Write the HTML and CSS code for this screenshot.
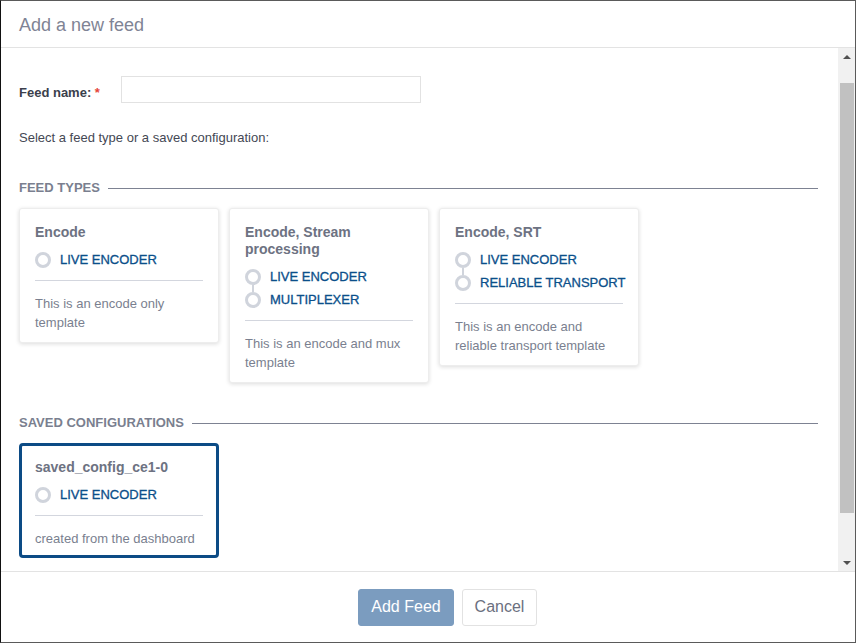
FILE: index.html
```html
<!DOCTYPE html>
<html>
<head>
<meta charset="utf-8">
<link rel="stylesheet" href="styles.css">
</head>
<body>
<div class="modal">
  <div class="modal-header"><h1 class="modal-title">Add a new feed</h1></div>
  <div class="modal-main">
    <div class="modal-body">
      <div class="form-row">
        <label class="form-label">Feed name: <span class="req">*</span></label>
        <input class="form-input" type="text">
      </div>
      <p class="hint">Select a feed type or a saved configuration:</p>

      <div class="section-head"><span>FEED TYPES</span></div>
      <div class="card-list">
        <div class="card">
          <div class="card-title">Encode</div>
          <ul class="steps">
            <li class="step"><span class="dot"></span>LIVE ENCODER</li>
          </ul>
          <div class="card-sep"></div>
          <p class="card-desc">This is an encode only template</p>
        </div>
        <div class="card">
          <div class="card-title">Encode, Stream processing</div>
          <ul class="steps">
            <li class="step"><span class="dot linked"></span>LIVE ENCODER</li>
            <li class="step"><span class="dot"></span>MULTIPLEXER</li>
          </ul>
          <div class="card-sep"></div>
          <p class="card-desc">This is an encode and mux template</p>
        </div>
        <div class="card">
          <div class="card-title">Encode, SRT</div>
          <ul class="steps">
            <li class="step"><span class="dot linked"></span>LIVE ENCODER</li>
            <li class="step"><span class="dot"></span>RELIABLE TRANSPORT</li>
          </ul>
          <div class="card-sep"></div>
          <p class="card-desc">This is an encode and reliable transport template</p>
        </div>
      </div>

      <div class="section-head saved-head"><span>SAVED CONFIGURATIONS</span></div>
      <div class="card-list">
        <div class="card card-selected">
          <div class="card-title">saved_config_ce1-0</div>
          <ul class="steps">
            <li class="step"><span class="dot"></span>LIVE ENCODER</li>
          </ul>
          <div class="card-sep"></div>
          <p class="card-desc">created from the dashboard</p>
        </div>
      </div>
    </div>
    <div class="scrollbar">
      <div class="sb-btn"><span class="arrow-up"></span></div>
      <div class="sb-track"><div class="sb-thumb"></div></div>
      <div class="sb-btn"><span class="arrow-down"></span></div>
    </div>
  </div>
  <div class="modal-footer">
    <button class="btn btn-primary">Add Feed</button>
    <button class="btn btn-default">Cancel</button>
  </div>
</div>
</body>
</html>
```
FILE: styles.css
```css
* { box-sizing: border-box; }
html, body { margin: 0; padding: 0; background: #fff; }
body { font-family: "Liberation Sans", Arial, sans-serif; }

.modal {
  width: 856px;
  height: 643px;
  border: 1px solid #5a5a5a;
  border-left-color: #111;
  display: flex;
  flex-direction: column;
  background: #fff;
}

.modal-header {
  height: 47px;
  border-bottom: 1px solid #e3e3e3;
  padding: 0 18px;
  display: flex;
  align-items: center;
}
.modal-title {
  margin: 0;
  font-size: 18px;
  font-weight: normal;
  color: #7f8495;
  line-height: 22px;
  padding-top: 1px;
}

.modal-main {
  flex: 1;
  display: flex;
  min-height: 0;
}
.modal-body {
  flex: 1;
  padding: 28px 20px 0 18px;
  overflow: hidden;
}

.form-row {
  display: flex;
  align-items: center;
  height: 27px;
}
.form-label {
  width: 102px;
  font-size: 13px;
  font-weight: bold;
  color: #3b3f4c;
  padding-top: 5px;
}
.req { color: #e5453a; }
.form-input {
  width: 300px;
  height: 27px;
  border: 1px solid #e2e2e2;
  margin: 0;
  padding: 0 6px;
  font: inherit;
}

.hint {
  margin: 27px 0 0;
  font-size: 13px;
  line-height: 16px;
  color: #444854;
}

.section-head {
  display: flex;
  align-items: center;
  margin-top: 34px;
  margin-bottom: 12px;
  font-size: 13px;
  font-weight: bold;
  line-height: 16px;
  color: #7a7f8f;
}
.section-head::after {
  content: "";
  flex: 1;
  height: 1px;
  background: #7d8292;
  margin-left: 8px;
}
.saved-head { margin-top: 32px; }

.card-list {
  display: flex;
  align-items: flex-start;
  gap: 10px;
}
.card {
  width: 200px;
  border: 1px solid #ededed;
  border-radius: 3px;
  box-shadow: 0 1px 4px rgba(0, 0, 0, 0.14);
  padding: 15px 15px 10px;
  background: #fff;
}
.card-selected {
  border: 3px solid #0c4b85;
  border-radius: 4px;
  box-shadow: none;
  padding: 13px 13px 7px;
}
.card-title {
  font-size: 14px;
  font-weight: bold;
  line-height: 17px;
  color: #6d7282;
  margin-bottom: 7px;
}
.steps {
  list-style: none;
  margin: 0;
  padding: 0;
}
.step {
  display: flex;
  align-items: center;
  height: 23px;
  font-size: 13px;
  color: #0b4f8a;
  white-space: nowrap;
  -webkit-text-stroke: 0.3px #0b4f8a;
}
.dot {
  position: relative;
  width: 16px;
  height: 16px;
  border: 3px solid #d0d4dc;
  border-radius: 50%;
  margin-right: 9px;
  flex: none;
}
.dot.linked::after {
  content: "";
  position: absolute;
  left: 4px;
  top: 13px;
  width: 2px;
  height: 7px;
  background: #d0d4dc;
}
.card-sep {
  height: 1px;
  background: #d3d6de;
  margin-top: 9px;
}
.card-desc {
  margin: 13px 0 0;
  font-size: 13px;
  line-height: 19px;
  color: #7a7f8f;
}

.scrollbar {
  width: 17px;
  background: #f1f1f1;
  display: flex;
  flex-direction: column;
}
.sb-btn {
  height: 17px;
  display: flex;
  align-items: center;
  justify-content: center;
}
.arrow-up {
  width: 0; height: 0;
  border-left: 4px solid transparent;
  border-right: 4px solid transparent;
  border-bottom: 4px solid #505050;
}
.arrow-down {
  width: 0; height: 0;
  border-left: 4px solid transparent;
  border-right: 4px solid transparent;
  border-top: 4px solid #505050;
}
.sb-track {
  flex: 1;
  padding: 18px 1px 0 2px;
}
.sb-thumb {
  height: 430px;
  background: #c1c1c1;
}

.modal-footer {
  height: 71px;
  border-top: 1px solid #e3e3e3;
  display: flex;
  align-items: center;
  justify-content: center;
  gap: 8px;
  padding-left: 39px;
}
.btn {
  height: 37px;
  font-family: inherit;
  font-size: 16px;
  border-radius: 3px;
  margin: 0;
  cursor: pointer;
}
.btn-primary {
  width: 96px;
  background: #7b9cbf;
  border: 1px solid #7b9cbf;
  color: #fff;
}
.btn-default {
  width: 75px;
  background: #fff;
  border: 1px solid #e2e2e2;
  color: #6b7080;
}
```
